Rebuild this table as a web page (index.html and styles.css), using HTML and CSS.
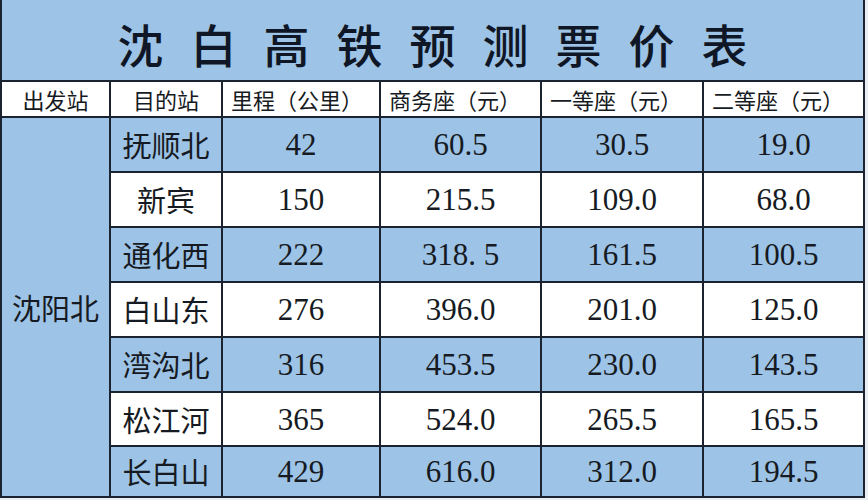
FILE: index.html
```html
<!DOCTYPE html>
<html lang="zh-CN">
<head>
<meta charset="utf-8">
<title>沈白高铁预测票价表</title>
<link rel="stylesheet" href="styles.css">
</head>
<body>
<div class="sheet">
  <div class="title">沈白高铁预测票价表</div>

  <div class="cell head c">出发站</div>
  <div class="cell head c">目的站</div>
  <div class="cell head l">里程（公里）</div>
  <div class="cell head l">商务座（元）</div>
  <div class="cell head l">一等座（元）</div>
  <div class="cell head l">二等座（元）</div>

  <div class="cell origin">沈阳北</div>

  <div class="cell blue name">抚顺北</div>
  <div class="cell blue num">42</div>
  <div class="cell blue num">60.5</div>
  <div class="cell blue num">30.5</div>
  <div class="cell blue num">19.0</div>

  <div class="cell white name">新宾</div>
  <div class="cell white num">150</div>
  <div class="cell white num">215.5</div>
  <div class="cell white num">109.0</div>
  <div class="cell white num">68.0</div>

  <div class="cell blue name">通化西</div>
  <div class="cell blue num">222</div>
  <div class="cell blue num">318. 5</div>
  <div class="cell blue num">161.5</div>
  <div class="cell blue num">100.5</div>

  <div class="cell white name">白山东</div>
  <div class="cell white num">276</div>
  <div class="cell white num">396.0</div>
  <div class="cell white num">201.0</div>
  <div class="cell white num">125.0</div>

  <div class="cell blue name">湾沟北</div>
  <div class="cell blue num">316</div>
  <div class="cell blue num">453.5</div>
  <div class="cell blue num">230.0</div>
  <div class="cell blue num">143.5</div>

  <div class="cell white name">松江河</div>
  <div class="cell white num">365</div>
  <div class="cell white num">524.0</div>
  <div class="cell white num">265.5</div>
  <div class="cell white num">165.5</div>

  <div class="cell blue name">长白山</div>
  <div class="cell blue num">429</div>
  <div class="cell blue num">616.0</div>
  <div class="cell blue num">312.0</div>
  <div class="cell blue num">194.5</div>
</div>
</body>
</html>
```
FILE: styles.css
```css
html, body {
  margin: 0;
  padding: 0;
  background: #e9eef3;
}

.sheet {
  display: grid;
  grid-template-columns: 107px 110px 156px 159px 160px 159px;
  grid-template-rows: 80px 34px 53px 53px 53px 53px 53px 52px 49px;
  gap: 2px;
  padding: 0 2px 2px 2px;
  width: max-content;
  background: #1b2331;
  font-family: "Noto Sans CJK SC", "Noto Sans", sans-serif;
  color: #161a22;
}

.title {
  grid-column: 1 / -1;
  background: #9dc3e6;
  display: flex;
  align-items: center;
  justify-content: center;
  padding-top: 5px;
  padding-left: 27px;
  font-size: 46px;
  font-weight: 500;
  letter-spacing: 27px;
  color: #0f1726;
  line-height: 1;
}

.cell {
  display: flex;
  align-items: center;
  line-height: 1;
  white-space: nowrap;
}

.head {
  background: #ffffff;
  font-size: 22px;
}

.head.c {
  justify-content: center;
}

.head.l {
  justify-content: flex-start;
  padding-left: 8px;
}

.origin {
  grid-column: 1;
  grid-row: 3 / span 7;
  background: #9dc3e6;
  justify-content: center;
  font-size: 29px;
}

.blue {
  background: #9dc3e6;
}

.white {
  background: #ffffff;
}

.name {
  justify-content: center;
  font-size: 29px;
}

.num {
  justify-content: center;
  font-family: "Liberation Serif", "Times New Roman", serif;
  font-size: 31px;
}
```
